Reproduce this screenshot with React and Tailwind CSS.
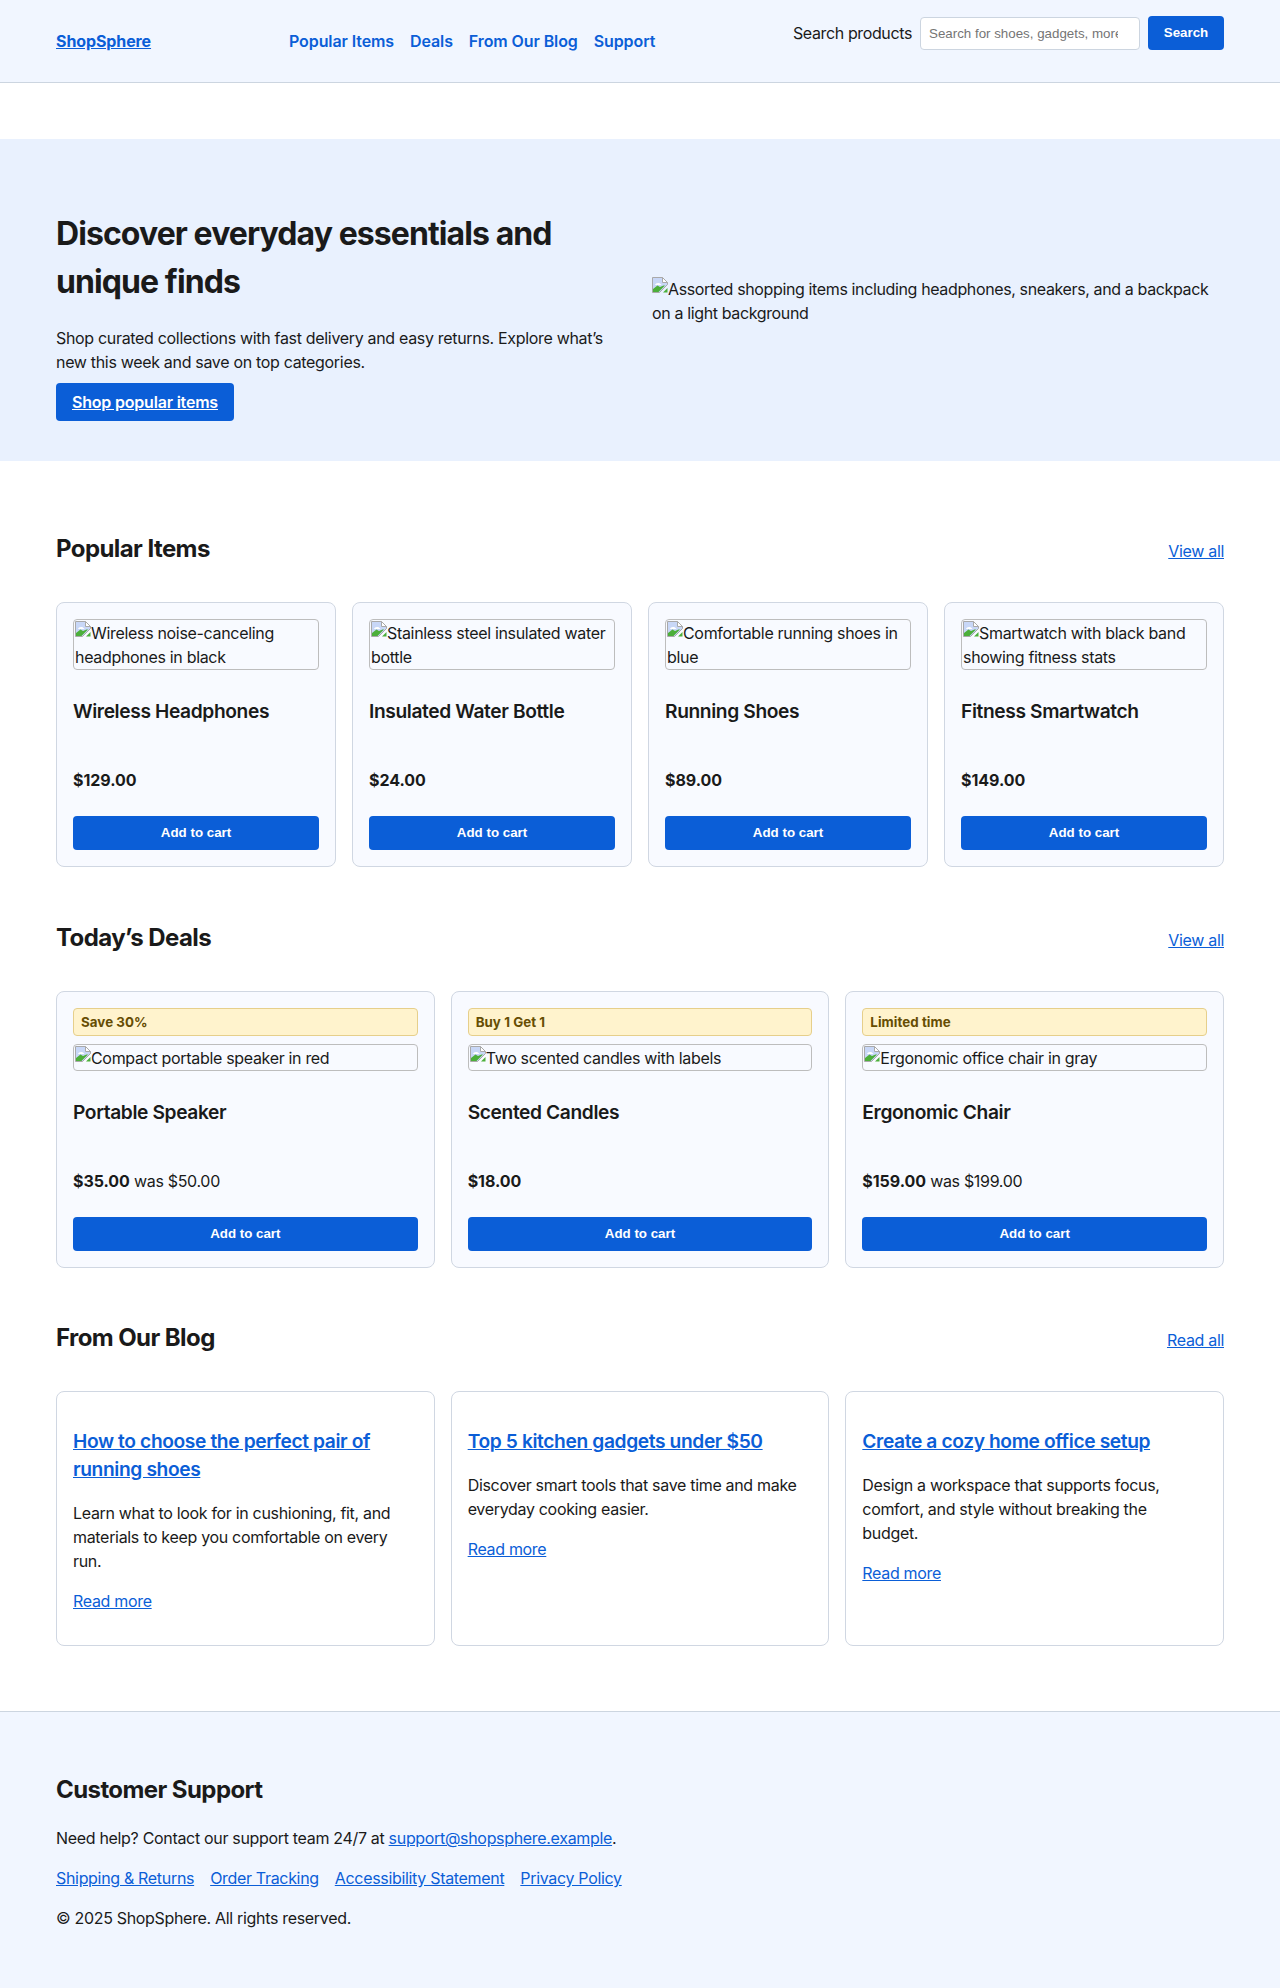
const products = [
  ["Wireless noise-canceling headphones in black", "Wireless Headphones", "$129.00"],
  ["Stainless steel insulated water bottle", "Insulated Water Bottle", "$24.00"],
  ["Comfortable running shoes in blue", "Running Shoes", "$89.00"],
  ["Smartwatch with black band showing fitness stats", "Fitness Smartwatch", "$149.00"],
];
const deals = [
  ["Save 30%", "Compact portable speaker in red", "Portable Speaker", "$35.00", "was $50.00"],
  ["Buy 1 Get 1", "Two scented candles with labels", "Scented Candles", "$18.00", ""],
  ["Limited time", "Ergonomic office chair in gray", "Ergonomic Chair", "$159.00", "was $199.00"],
];
const posts = [
  ["How to choose the perfect pair of running shoes", "Learn what to look for in cushioning, fit, and materials to keep you comfortable on every run."],
  ["Top 5 kitchen gadgets under $50", "Discover smart tools that save time and make everyday cooking easier."],
  ["Create a cozy home office setup", "Design a workspace that supports focus, comfort, and style without breaking the budget."],
];
const linkCls = "text-[#0b5ed7] underline";

function BrokenIcon() {
  return (
    <svg width="16" height="16" viewBox="0 0 16 16" className="inline-block align-[2px]">
      <path d="M0.5 0.5H10.5L15.5 5.5V7.5L7.5 15.5H0.5Z" fill="#c8d7f7" stroke="#a9a9a9" />
      <path d="M3 8C3.5 5.5 8 5 9.5 8Z" fill="#ffffff" />
      <path d="M1 15V12L5.5 8.5L8 10L11.5 8.5L13 8.5L6.5 15Z" fill="#4caf3a" />
      <path d="M15.5 11V15.5H11Z" fill="#4caf3a" />
      <path d="M10.5 0.5V5.5H15.5L10.5 0.5Z" fill="#ffffff" stroke="#a9a9a9" />
    </svg>
  );
}

function Broken({ alt }) {
  return (
    <div className="border border-[#bdbdbd] rounded-[4px] leading-6 text-[#1a1a1a] pl-px pt-px">
      <BrokenIcon />
      {alt}
    </div>
  );
}

function CartButton({ h }) {
  return (
    <button className={`w-full ${h} bg-[#0b5ed7] text-white text-[13.33px] rounded-[4px] font-['Liberation_Sans',sans-serif] font-bold tracking-normal`}>
      Add to cart
    </button>
  );
}

function SectionHead({ title, link }) {
  return (
    <div className="flex justify-between items-baseline mb-[16px]">
      <h2 className="text-2xl font-bold leading-[36px] mt-[21px] mb-[19px] text-[#1a1a1a] tracking-[-0.58px]">{title}</h2>
      <a className={linkCls}>{link}</a>
    </div>
  );
}

export default function App() {
  return (
    <div className="font-['Inter',sans-serif] text-base leading-6 text-[#1a1a1a] bg-white tracking-[-0.32px]">
      <header className="h-[83px] bg-[#f1f6ff] border-b border-[#ccd5e0] px-[56px] flex items-start">
        <a className="w-[233px] mt-[29px] font-bold text-[#0b5ed7] underline tracking-[-0.1px]">ShopSphere</a>
        <nav className="flex gap-4 mt-[29px] font-semibold text-[#0b5ed7] tracking-[-0.1px]">
          <a>Popular Items</a>
          <a>Deals</a>
          <a>From Our Blog</a>
          <a>Support</a>
        </nav>
        <div className="ml-auto mt-[16px] flex items-center gap-2">
          <label className="tracking-[-0.37px]">Search products</label>
          <input
            readOnly
            placeholder="Search for shoes, gadgets, more"
            className="w-[220px] h-[33px] bg-white border border-[#ccd5e0] rounded-[4px] pl-2 pr-[21px] text-[13.33px] tracking-normal font-['Liberation_Sans',sans-serif] placeholder:text-[#757575]"
          />
          <button className="w-[76px] h-[34px] bg-[#0b5ed7] text-white text-[13.33px] font-bold rounded-[4px] tracking-normal font-['Liberation_Sans',sans-serif]">
            Search
          </button>
        </div>
      </header>

      <section className="mt-[56px] bg-[#e9f1fe] px-[56px] py-[40px] grid grid-cols-2 gap-6 items-center">
        <div>
          <h1 className="text-[32px] leading-[48px] font-bold mt-[31px] mb-[20px] tracking-[-0.92px]">Discover everyday essentials and unique finds</h1>
          <p className="mb-[9px]">Shop curated collections with fast delivery and easy returns. Explore what’s new this week and save on top categories.</p>
          <a className="inline-block bg-[#0b5ed7] text-white font-semibold underline rounded-[4px] px-4 py-[7px] tracking-[-0.2px]">Shop popular items</a>
        </div>
        <div className="leading-6 pt-[2px] tracking-[-0.37px]">
          <BrokenIcon />
          Assorted shopping items including headphones, sneakers, and a backpack on a light background
        </div>
      </section>

      <main className="px-[56px] pt-[49px]">
        <SectionHead title="Popular Items" link="View all" />
        <div className="grid grid-cols-4 gap-4 mb-[32px]">
          {products.map(([alt, name, price]) => (
            <div key={name} className="bg-[#f8faff] border border-[#d0d7e2] rounded-lg p-4">
              <Broken alt={alt} />
              <h3 className="text-[19.2px] font-semibold leading-[28.8px] mt-[27px] mb-[42px] tracking-[-0.38px]">{name}</h3>
              <p className="mb-6 font-bold tracking-[-0.05px]">{price}</p>
              <CartButton h="h-[34.5px]" />
            </div>
          ))}
        </div>

        <SectionHead title="Today’s Deals" link="View all" />
        <div className="grid grid-cols-3 gap-4 mb-[31px]">
          {deals.map(([badge, alt, name, price, was]) => (
            <div key={name} className="bg-[#f8faff] border border-[#d0d7e2] rounded-lg p-4">
              <div className="bg-[#fff3cd] border border-[#e6cf8b] rounded-[4px] text-[#664d03] text-[13.33px] font-bold tracking-[0.05px] px-[7px] py-[4px] h-[27.5px] leading-[18px] mb-[8.5px]">{badge}</div>
              <Broken alt={alt} />
              <h3 className="text-[19.2px] font-semibold leading-[28.8px] mt-[27px] mb-[42px] tracking-[-0.38px]">{name}</h3>
              <p className="mb-6"><span className="font-bold tracking-[-0.05px]">{price}</span>{was ? " " + was : ""}</p>
              <CartButton h="h-[34px]" />
            </div>
          ))}
        </div>

        <SectionHead title="From Our Blog" link="Read all" />
        <div className="grid grid-cols-3 gap-4">
          {posts.map(([title, body]) => (
            <div key={title} className="bg-white border border-[#d0d7e2] rounded-lg pt-4 px-4 pb-[32px]">
              <h3 className="text-[19.2px] font-semibold leading-[28px] mt-[19px] mb-[18px] tracking-[-0.38px]"><a className={linkCls}>{title}</a></h3>
              <p className="mb-4 pr-2">{body}</p>
              <a className={linkCls}>Read more</a>
            </div>
          ))}
        </div>
      </main>

      <footer className="mt-[65px] bg-[#f1f6ff] border-t border-[#ccd5e0] px-[56px] pt-[40px] pb-[58px]">
        <h2 className="text-2xl font-bold leading-[36px] mt-[20px] mb-[18px] tracking-[-0.58px]">Customer Support</h2>
        <p className="mb-4">Need help? Contact our support team 24/7 at <a className={linkCls}>support@shopsphere.example</a>.</p>
        <div className="flex gap-4 mb-4">
          <a className={linkCls}>Shipping &amp; Returns</a>
          <a className={linkCls}>Order Tracking</a>
          <a className={linkCls}>Accessibility Statement</a>
          <a className={linkCls}>Privacy Policy</a>
        </div>
        <p>© 2025 ShopSphere. All rights reserved.</p>
      </footer>
    </div>
  );
}
